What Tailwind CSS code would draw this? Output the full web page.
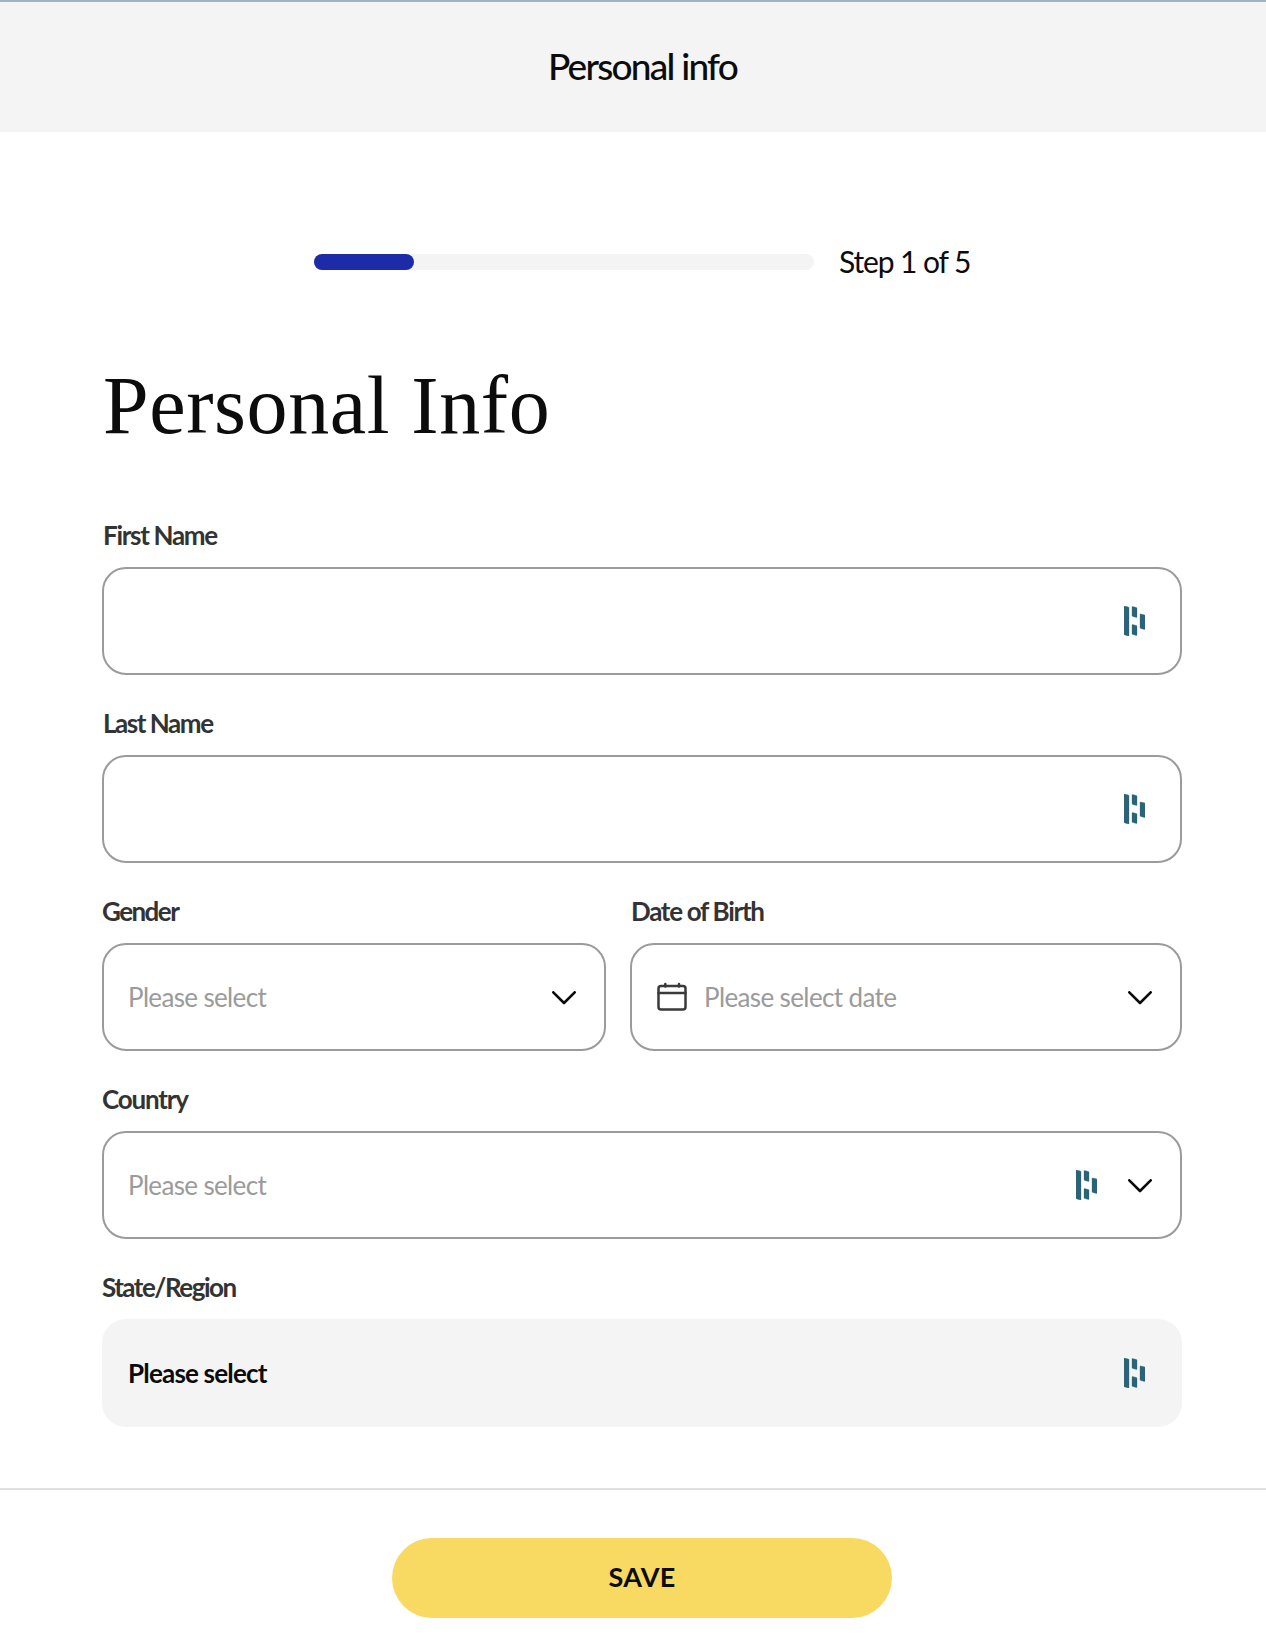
<!DOCTYPE html>
<html lang="en">
<head>
<meta charset="utf-8">
<title>Personal info</title>
<script src="https://cdn.jsdelivr.net/npm/@tailwindcss/browser@4"></script>
</head>
<body class="bg-white font-[Lato,sans-serif] text-[#0c0c0c]">
<svg class="hidden">
  <symbol id="fill" viewBox="0 0 21 30"><path fill="#2b6478" stroke="#2b6478" stroke-width=".3" d="M0 .6Q0 0 .7.1L4.3 1q.7.2.7.9v27.5q0 .6-.7.5L.7 29Q0 28.8 0 28zM8 1.100Q8 .5 8.700.6l3.600.9q.7.2.7.9v8.500q0 .6-.7.5L8.700 10.500Q8 10.300 8 9.600zM8 19q0-.6.7-.5l3.600.9q.7.200.7.900v8.700q0 .6-.7.5l-3.600-.9Q8 28.400 8 27.700zM16 8.400q0-.6.7-.5l3.600.9q.7.200.7.900v13.200q0 .6-.7.500l-3.600-.9Q16 22.300 16 21.600z"/></symbol>
  <symbol id="chevron" viewBox="0 0 24 14"><path fill="none" stroke="#0c0c0c" stroke-width="2.600" stroke-linecap="round" stroke-linejoin="round" d="M1.300 1.300 12 12 22.700 1.300"/></symbol>
</svg>

<header class="flex h-[132px] items-center justify-center border-t-2 border-[#a4b0c4] bg-[#f4f4f4] pb-0.5 pl-[19px]">
  <h2 class="text-[37px] font-medium leading-[48px] tracking-[-1.75px]">Personal info</h2>
</header>

<main class="h-[1356px] pl-[102px] pr-[84px] pt-[106px]">
  <div class="flex h-12 items-center gap-6 pl-[212px]">
    <div class="h-4 w-[500px] rounded-full bg-[#f4f4f4]"><div class="h-4 w-1/5 rounded-full bg-[#1d2ba8]"></div></div>
    <span class="pb-0.5 pl-px text-[30px] leading-[36px] tracking-[-1.1px]">Step 1 of 5</span>
  </div>

  <h1 class="mt-[74px] pl-px font-['Liberation_Serif',serif] text-[82px] leading-[92px] tracking-[0.6px]">Personal Info</h1>

  <form class="mt-[66px] grid grid-cols-[504px_552px] gap-x-6 gap-y-[31px] text-[26px] text-[#333]">
    <div class="col-span-2">
      <div class="mb-4 h-[33px] pl-px pt-px font-bold leading-8 tracking-[-1.3px]">First Name</div>
      <div class="flex h-[108px] items-center justify-end rounded-3xl border-2 border-[#9b9b9b] pr-[35px]"><svg class="h-[30px] w-[21px] overflow-visible"><use href="#fill"/></svg></div>
    </div>
    <div class="col-span-2">
      <div class="mb-4 h-[33px] pl-px pt-px font-bold leading-8 tracking-[-1.45px]">Last Name</div>
      <div class="flex h-[108px] items-center justify-end rounded-3xl border-2 border-[#9b9b9b] pr-[35px]"><svg class="h-[30px] w-[21px] overflow-visible"><use href="#fill"/></svg></div>
    </div>
    <div>
      <div class="mb-4 h-[33px] pt-px font-bold leading-8 tracking-[-1.55px]">Gender</div>
      <div class="flex h-[108px] items-center justify-between rounded-3xl border-2 border-[#9b9b9b] pl-6 pr-7">
        <span class="tracking-[-0.65px] text-[#9b9b9b]">Please select</span>
        <svg class="mt-0.5 h-[14px] w-6"><use href="#chevron"/></svg>
      </div>
    </div>
    <div>
      <div class="mb-4 h-[33px] pl-px pt-px font-bold leading-8 tracking-[-1.3px]">Date of Birth</div>
      <div class="flex h-[108px] items-center rounded-3xl border-2 border-[#9b9b9b] pl-[25px] pr-7">
        <svg class="h-[30px] w-[30px]" viewBox="0 0 30 30" fill="none" stroke="#3a3a3a" stroke-width="2.500" stroke-linecap="round"><rect x="1.500" y="4" width="27" height="23.500" rx="2.500"/><path d="M1.500 11h27M8.300 2v2.500M22 2v2.500"/></svg>
        <span class="ml-[17px] grow tracking-[-0.62px] text-[#9b9b9b]">Please select date</span>
        <svg class="mt-0.5 h-[14px] w-6"><use href="#chevron"/></svg>
      </div>
    </div>
    <div class="col-span-2">
      <div class="mb-4 h-[33px] pt-px font-bold leading-8 tracking-[-1.2px]">Country</div>
      <div class="flex h-[108px] items-center rounded-3xl border-2 border-[#9b9b9b] pl-6 pr-7">
        <span class="grow tracking-[-0.65px] text-[#9b9b9b]">Please select</span>
        <svg class="mr-[31px] h-[30px] w-[21px] overflow-visible"><use href="#fill"/></svg>
        <svg class="mt-0.5 h-[14px] w-6"><use href="#chevron"/></svg>
      </div>
    </div>
    <div class="col-span-2">
      <div class="mb-4 h-[33px] pt-px font-bold leading-8 tracking-[-1.5px]">State/Region</div>
      <div class="flex h-[108px] items-center justify-between rounded-3xl bg-[#f4f4f4] pl-[26px] pr-[37px]">
        <span class="font-bold tracking-[-0.8px] text-[#0c0c0c]">Please select</span>
        <svg class="h-[30px] w-[21px] overflow-visible"><use href="#fill"/></svg>
      </div>
    </div>
  </form>
</main>

<footer class="flex h-[164px] justify-center border-t-2 border-[#e0e0e0] pl-[18px] pt-12">
  <button class="h-20 w-[500px] rounded-full bg-[#f8da62] pb-0.5 text-[27px] font-bold tracking-[0.3px]">SAVE</button>
</footer>
</body>
</html>
